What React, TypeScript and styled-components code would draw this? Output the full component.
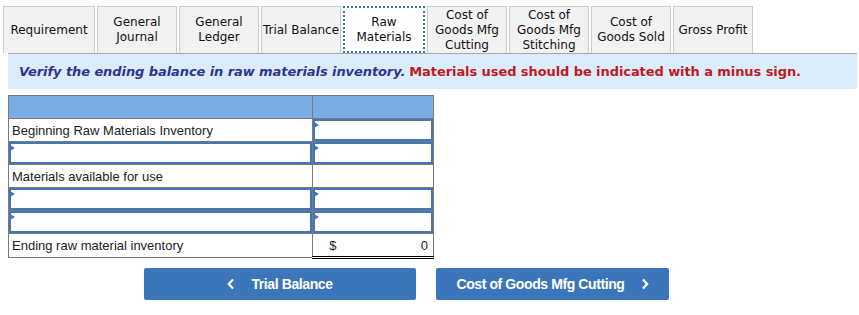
import React from 'react';
import styled, { createGlobalStyle } from 'styled-components';

const GlobalStyle = createGlobalStyle`
    body {
        margin: 0;
        background: #ffffff;
        font-family: "DejaVu Sans", Verdana, sans-serif;
    }
`;

const Page = styled.div`
    width: 859px;
    padding: 6px 2px 0 8px;
    box-sizing: border-box;
`;

const TabRow = styled.div`
    display: flex;
    align-items: stretch;
    gap: 2px;
    margin-left: -5px;
    height: 47px;
`;

type TabProps = {
    active?: boolean,
    wide?: boolean
}

const Tab = styled.div<TabProps>`
    display: flex;
    align-items: center;
    justify-content: center;
    text-align: center;
    font-size: 12px;
    line-height: 15px;
    color: #111;
    box-sizing: border-box;
    background: ${p => p.active ? '#ffffff' : '#f2f2f2'};
    border: ${p => p.active ? '2px dotted #3b6fb6' : '1px solid #cccccc'};
    border-bottom: ${p => p.active ? '2px dotted #3b6fb6' : 'none'};
    width: ${p => p.active ? '82px' : p.wide ? '92px' : '80px'};
    white-space: nowrap;
`;

const Instruction = styled.div`
    border-top: 1px solid #a6a6a6;
    background: #dcecfa;
    height: 35px;
    display: flex;
    align-items: center;
    padding-left: 11px;
    font-size: 13px;
    font-weight: bold;
    letter-spacing: -0.08px;
`;

const Blue = styled.span`
    color: #2e3590;
    font-style: italic;
`;

const Red = styled.span`
    color: #bf1a1f;
    margin-left: 4px;
`;

const Table = styled.table`
    margin-top: 6px;
    border-collapse: collapse;
    width: 426px;
    font-family: "Liberation Sans", Arial, sans-serif;
    font-size: 13px;
    color: #222;
`;

const HeadCell = styled.th`
    background: #79ade3;
    border: 1px solid #7a7a7a;
    height: 22px;
    padding: 0;
`;

type CellProps = {
    top?: boolean,
    double?: boolean
}

const Cell = styled.td<CellProps>`
    border: 1px solid #7a7a7a;
    border-top: ${p => p.top ? '1px solid #000' : '1px solid #7a7a7a'};
    border-bottom: ${p => p.double ? '3px double #000' : '1px solid #7a7a7a'};
    height: 22px;
    padding: 0 3px;
    line-height: 15px;
`;

const InputCell = styled.td`
    border: 1px solid #7a7a7a;
    height: 22px;
    padding: 0;
`;

const InputBox = styled.div`
    height: 22px;
    box-sizing: border-box;
    border: 2px solid #4476b6;
    position: relative;
    &::before {
        content: '';
        position: absolute;
        left: -1px;
        top: 1px;
        border-left: 5px solid #3f73c4;
        border-top: 3px solid transparent;
        border-bottom: 3px solid transparent;
    }
`;

const Amount = styled.div`
    display: flex;
    justify-content: space-between;
    padding: 0 2px 0 13px;
`;

const Buttons = styled.div`
    display: flex;
    gap: 20px;
    margin: 9px 0 0 136px;
`;

type ButtonProps = {
    width: number
}

const NavButton = styled.div<ButtonProps>`
    width: ${p => p.width}px;
    height: 32px;
    background: #3a76b9;
    border-radius: 2px;
    color: #fff;
    font-family: "Liberation Sans", Arial, sans-serif;
    font-weight: bold;
    font-size: 14px;
    letter-spacing: -0.4px;
    display: flex;
    align-items: center;
    justify-content: center;
    gap: 16px;
`;

const Chevron = ({ dir }: { dir: 'left' | 'right' }) => (
    <svg width="8" height="12" viewBox="0 0 8 12">
        <path
            d={dir === 'left' ? 'M6 1.5 L1.8 6 L6 10.5' : 'M2 1.5 L6.2 6 L2 10.5'}
            fill="none"
            stroke="#fff"
            strokeWidth="2.2"
        />
    </svg>
);

const tabs = [
    'Requirement',
    'General\nJournal',
    'General\nLedger',
    'Trial Balance',
    'Raw\nMaterials',
    'Cost of\nGoods Mfg\nCutting',
    'Cost of\nGoods Mfg\nStitching',
    'Cost of\nGoods Sold',
    'Gross Profit',
];

function App() {
    return (
        <Page>
            <GlobalStyle />
            <TabRow>
                {tabs.map((t, i) => (
                    <Tab key={i} wide={i === 0} active={i === 4}>
                        <span>{t.split('\n').map((l, j) => <div key={j}>{l}</div>)}</span>
                    </Tab>
                ))}
            </TabRow>
            <Instruction>
                <Blue>Verify the ending balance in raw materials inventory.</Blue>
                <Red>Materials used should be indicated with a minus sign.</Red>
            </Instruction>
            <Table>
                <colgroup>
                    <col style={{ width: 305 }} />
                    <col style={{ width: 121 }} />
                </colgroup>
                <thead>
                    <tr><HeadCell /><HeadCell /></tr>
                </thead>
                <tbody>
                    <tr>
                        <Cell>Beginning Raw Materials Inventory</Cell>
                        <InputCell><InputBox /></InputCell>
                    </tr>
                    <tr>
                        <InputCell><InputBox /></InputCell>
                        <InputCell><InputBox /></InputCell>
                    </tr>
                    <tr>
                        <Cell>Materials available for use</Cell>
                        <Cell top />
                    </tr>
                    <tr>
                        <InputCell><InputBox /></InputCell>
                        <InputCell><InputBox /></InputCell>
                    </tr>
                    <tr>
                        <InputCell><InputBox /></InputCell>
                        <InputCell><InputBox /></InputCell>
                    </tr>
                    <tr>
                        <Cell>Ending raw material inventory</Cell>
                        <Cell top double><Amount><span>$</span><span>0</span></Amount></Cell>
                    </tr>
                </tbody>
            </Table>
            <Buttons>
                <NavButton width={272}><Chevron dir="left" />Trial Balance</NavButton>
                <NavButton width={233}>Cost of Goods Mfg Cutting<Chevron dir="right" /></NavButton>
            </Buttons>
        </Page>
    );
}

export default App;
